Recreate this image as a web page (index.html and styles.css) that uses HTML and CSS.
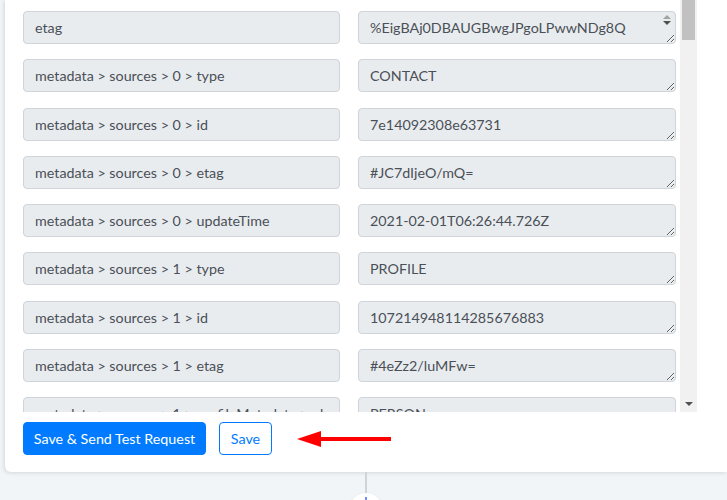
FILE: index.html
```html
<!DOCTYPE html>
<html lang="en">
  <head>
    <meta charset="UTF-8" />
    <title>Test Request</title>
    <link rel="stylesheet" href="styles.css">
  </head>
  <body>
    <div class="card">
      <div class="scroll-wrap">
        <div class="fields">
          <div class="field-row">
            <input class="field-key" type="text" value="etag" readonly />
            <div class="value-wrap">
              <textarea class="field-value field-long" rows="1">%EigBAj0DBAUGBwgJPgoLPwwNDg8Q ERITFBUWFxgZGhscHR4fICEiIyQlJicoKSorLC0uLzAxMjM0NTY3ODk6OzwaDAjAgaamBhoEAQIDBSIMa0c1YnVHdlp2cGs9</textarea>
              <div class="mini-scroll">
                <span class="mini-up"></span>
                <span class="mini-down"></span>
              </div>
            </div>
          </div>
          <div class="field-row">
            <input class="field-key" type="text" value="metadata &gt; sources &gt; 0 &gt; type" readonly />
            <textarea class="field-value" rows="1">CONTACT</textarea>
          </div>
          <div class="field-row">
            <input class="field-key" type="text" value="metadata &gt; sources &gt; 0 &gt; id" readonly />
            <textarea class="field-value" rows="1">7e14092308e63731</textarea>
          </div>
          <div class="field-row">
            <input class="field-key" type="text" value="metadata &gt; sources &gt; 0 &gt; etag" readonly />
            <textarea class="field-value" rows="1">#JC7dIjeO/mQ=</textarea>
          </div>
          <div class="field-row">
            <input class="field-key" type="text" value="metadata &gt; sources &gt; 0 &gt; updateTime" readonly />
            <textarea class="field-value" rows="1">2021-02-01T06:26:44.726Z</textarea>
          </div>
          <div class="field-row">
            <input class="field-key" type="text" value="metadata &gt; sources &gt; 1 &gt; type" readonly />
            <textarea class="field-value" rows="1">PROFILE</textarea>
          </div>
          <div class="field-row">
            <input class="field-key" type="text" value="metadata &gt; sources &gt; 1 &gt; id" readonly />
            <textarea class="field-value" rows="1">107214948114285676883</textarea>
          </div>
          <div class="field-row">
            <input class="field-key" type="text" value="metadata &gt; sources &gt; 1 &gt; etag" readonly />
            <textarea class="field-value" rows="1">#4eZz2/luMFw=</textarea>
          </div>
          <div class="field-row">
            <input class="field-key" type="text" value="metadata &gt; sources &gt; 1 &gt; profileMetadata &gt; objectType" readonly />
            <textarea class="field-value" rows="1">PERSON</textarea>
          </div>
        </div>
        <div class="fake-scrollbar">
          <div class="scroll-thumb"></div>
          <div class="scroll-down"></div>
        </div>
      </div>
      <div class="card-footer">
        <button class="btn btn-primary">Save &amp; Send Test Request</button>
        <button class="btn btn-outline">Save</button>
        <svg class="hint-arrow" width="96" height="20" viewBox="0 0 96 20">
          <polygon points="0,10 24,2 24,8 94,8 94,12 24,12 24,18" fill="#ff0000" />
        </svg>
      </div>
    </div>
    <div class="connector">
      <div class="connector-line"></div>
      <div class="connector-node">
        <svg width="10" height="10" viewBox="0 0 10 10">
          <path d="M5 0V10M0 5H10" stroke="#6f8cff" stroke-width="2" />
        </svg>
      </div>
    </div>
  </body>
</html>
```

FILE: styles.css
```css
body {
  margin: 0;
  background-color: #f2f5f8;
  font-family: Lato, "Open Sans", sans-serif;
  overflow: hidden;
}

.card {
  margin-left: 5px;
  width: 722px;
  background-color: #fff;
  border-radius: 0 0 0 6px;
  box-shadow: -1px 1px 4px rgba(0, 0, 0, 0.12);
}

.scroll-wrap {
  display: flex;
  height: 412px;
  overflow: hidden;
}

.fields {
  width: 657px;
  padding: 11px 0 0 18px;
  overflow: hidden;
}

.field-row {
  display: grid;
  grid-template-columns: 317px 318px;
  column-gap: 18px;
  margin-bottom: 15.25px;
}

.field-key,
.field-value {
  box-sizing: border-box;
  width: 100%;
  height: 33px;
  margin: 0;
  padding: 5px 11px;
  font-family: Lato, "Open Sans", sans-serif;
  font-size: 14.3px;
  line-height: 21px;
  color: #495057;
  background-color: #e9ecef;
  border: 1px solid #ced4da;
  border-radius: 4px;
  outline: none;
}

.field-value {
  display: block;
  resize: vertical;
  overflow: hidden;
}

/* 긴 값: 스크롤 버튼이 보이는 textarea */
.value-wrap {
  position: relative;
}

.field-long {
  padding-right: 29px;
}

.mini-scroll {
  position: absolute;
  top: 1px;
  right: 1px;
  width: 17px;
  height: 15px;
  display: flex;
  flex-direction: column;
  align-items: center;
  justify-content: center;
  gap: 2px;
}

.mini-up,
.mini-down {
  width: 0;
  height: 0;
  border-left: 4px solid transparent;
  border-right: 4px solid transparent;
}

.mini-up {
  border-bottom: 4px solid #a3a3a3;
}

.mini-down {
  border-top: 4px solid #505050;
}

.fake-scrollbar {
  width: 17px;
  background-color: #f1f1f1;
  display: flex;
  flex-direction: column;
  justify-content: space-between;
  align-items: center;
}

.scroll-thumb {
  width: 13px;
  height: 40px;
  background-color: #c1c1c1;
}

.scroll-down {
  width: 0;
  height: 0;
  margin-bottom: 6px;
  border-left: 4px solid transparent;
  border-right: 4px solid transparent;
  border-top: 4px solid #505050;
}

.card-footer {
  display: flex;
  align-items: center;
  padding: 10px 0 17px 18px;
}

.btn {
  height: 33px;
  padding: 0;
  font-family: Lato, "Open Sans", sans-serif;
  font-size: 14.3px;
  white-space: nowrap;
  border-radius: 4px;
  cursor: pointer;
}

.btn-primary {
  width: 183px;
  color: #fff;
  background-color: #007bff;
  border: 1px solid #007bff;
}

.btn-outline {
  width: 53px;
  margin-left: 13px;
  color: #007bff;
  background-color: #fff;
  border: 1px solid #007bff;
}

.hint-arrow {
  margin-left: 25px;
}

.connector {
  display: flex;
  flex-direction: column;
  align-items: center;
  margin-left: 5px;
  width: 722px;
}

.connector-line {
  width: 2px;
  height: 21px;
  background-color: #d0d4d9;
}

.connector-node {
  width: 34px;
  height: 34px;
  border-radius: 50%;
  background-color: #fff;
  box-shadow: 0 1px 3px rgba(0, 0, 0, 0.1);
  display: flex;
  justify-content: center;
  padding-top: 4px;
  box-sizing: border-box;
}
```
